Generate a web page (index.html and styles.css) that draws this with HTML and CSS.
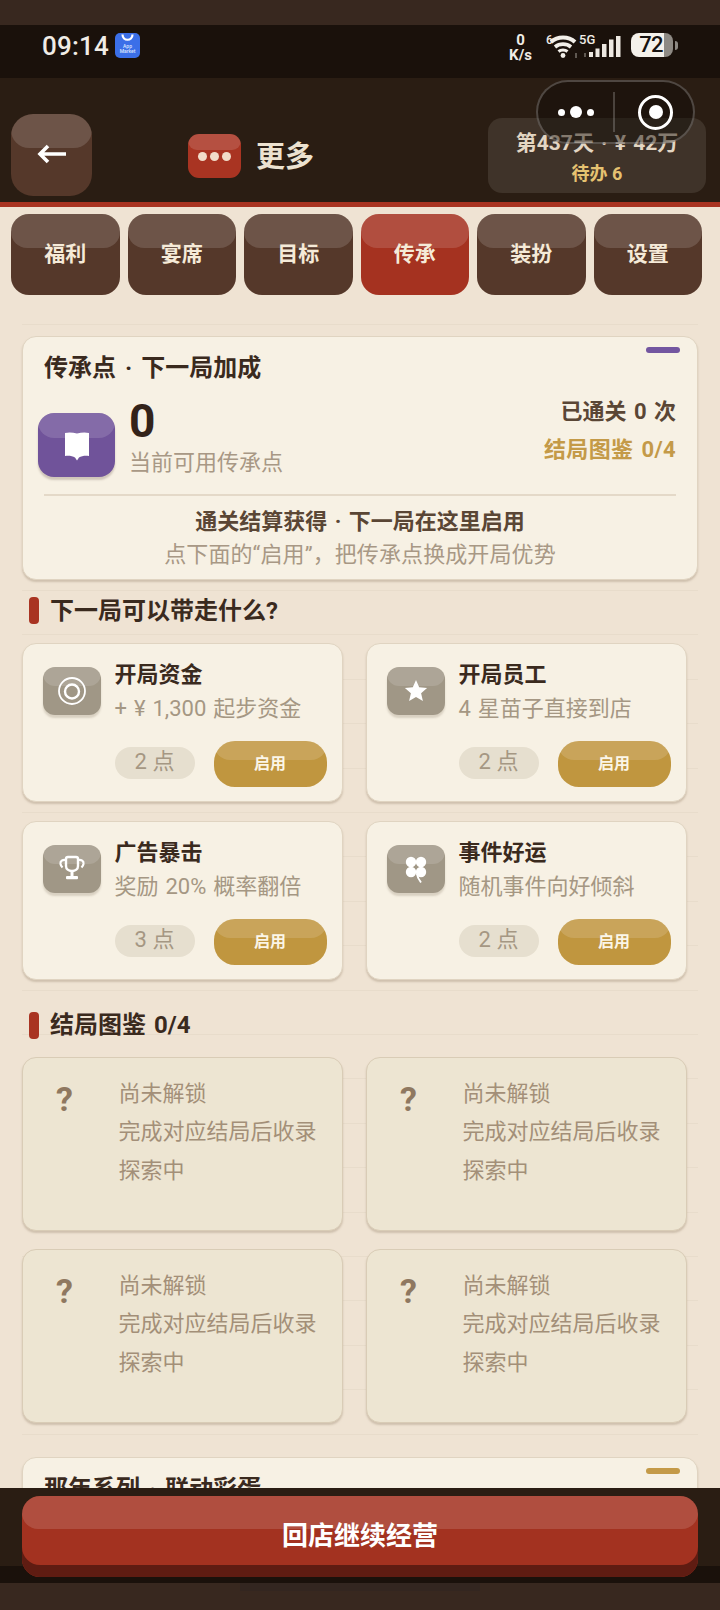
FILE: index.html
```html
<!DOCTYPE html>
<html lang="zh-CN">
<head>
<meta charset="utf-8">
<title>更多</title>
<link rel="stylesheet" href="styles.css">
</head>
<body>
<div class="phone">
  <div class="strip-top"></div>

  <div class="status">
    <span class="clock">09:14</span>
    <span class="store"><svg viewBox="0 0 25 25" width="25" height="25"><path d="M7.500 1.500c0 7 10 7 10 0" fill="none" stroke="#fff" stroke-width="2.200"/><text x="12.500" y="15" class="store-txt">App</text><text x="12.500" y="20" class="store-txt">Market</text></svg></span>
    <span class="speed"><b>0</b><b>K/s</b></span>
    <svg class="wifi" viewBox="0 0 36 26" width="36" height="26">
      <text x="1" y="11" class="mini">6</text>
      <path d="M6 9C12.500 3 23.500 3 30 9" fill="none" stroke="#f2efe9" stroke-width="4"/>
      <path d="M10 14c4.500-3.800 11.500-3.800 16 0" fill="none" stroke="#f2efe9" stroke-width="3.600"/>
      <path d="M13.500 18.500c2.500-2 6.500-2 9 0" fill="none" stroke="#f2efe9" stroke-width="3.200"/>
      <circle cx="18" cy="22.500" r="2.400" fill="#f2efe9"/>
      <path d="M31 20v5" stroke="#77706a" stroke-width="1.500"/>
    </svg>
    <span class="net">
      <span class="net-label">5G</span>
      <svg class="signal" viewBox="0 0 40 26" width="40" height="26">
        <path d="M2 20v4" stroke="#77706a" stroke-width="1.500"/>
        <rect x="6" y="19" width="4" height="5" fill="#eee9e2"/>
        <rect x="12.500" y="15.500" width="4" height="8.500" fill="#eee9e2"/>
        <rect x="19" y="11" width="4.500" height="13" fill="#eee9e2"/>
        <rect x="26" y="6.500" width="4.500" height="17.500" fill="#eee9e2"/>
        <rect x="33" y="3" width="4.500" height="21" fill="#eee9e2"/>
      </svg>
    </span>
    <span class="battery"><span class="battery-num">72</span></span>
    <span class="battery-tip"></span>
  </div>

  <header class="bar">
    <button class="back raised"><svg viewBox="0 0 32 24" width="32" height="24"><path d="M30 12H4M12 4l-8 8 8 8" fill="none" stroke="#fff" stroke-width="3.600"/></svg></button>
    <div class="heading">
      <span class="heading-icon raised"><i></i><i></i><i></i></span>
      <h1>更多</h1>
    </div>
    <div class="stats">
      <div class="stats-main">第437天 · ¥ 42万</div>
      <div class="stats-todo">待办 6</div>
    </div>
  </header>

  <div class="capsule">
    <span class="cap-dots"><i></i><i class="big"></i><i></i></span>
    <span class="cap-line"></span>
    <span class="cap-ring"><i></i></span>
  </div>

  <main class="main">
    <nav class="tabs">
      <a class="tab raised"><span>福利</span></a>
      <a class="tab raised"><span>宴席</span></a>
      <a class="tab raised"><span>目标</span></a>
      <a class="tab raised active"><span>传承</span></a>
      <a class="tab raised"><span>装扮</span></a>
      <a class="tab raised"><span>设置</span></a>
    </nav>

    <div class="scroll">
      <section class="hero">
        <span class="accent purple"></span>
        <h2 class="card-title">传承点 · 下一局加成</h2>
        <div class="hero-row">
          <span class="hero-icon raised">
            <svg viewBox="0 0 34 34" width="34" height="34"><path d="M5 4c4-1 8-.5 12 .5 4-1 8-1.500 12-.5v23c-4-.5-7.500 0-10 1.500l-2 3-2-3c-2.500-1.500-6-2-10-1.500z" fill="#fff"/></svg>
          </span>
          <div class="hero-points">
            <div class="big-num">0</div>
            <div class="hero-label">当前可用传承点</div>
          </div>
          <div class="hero-side">
            <div class="side-a">已通关 0 次</div>
            <div class="side-b">结局图鉴 0/4</div>
          </div>
        </div>
        <div class="hero-note">
          <div class="note-a">通关结算获得 · 下一局在这里启用</div>
          <div class="note-b">点下面的“启用”，把传承点换成开局优势</div>
        </div>
      </section>

      <h3 class="section-head"><span>下一局可以带走什么?</span></h3>
      <div class="grid">
        <article class="card option">
          <span class="opt-icon raised"><svg viewBox="0 0 58 48" width="58" height="48"><circle cx="29" cy="24" r="13" fill="none" stroke="#fff" stroke-width="1.800"/><circle cx="29" cy="24.500" r="7" fill="none" stroke="#fff" stroke-width="2.400"/></svg></span>
          <div class="opt-body">
            <div class="opt-title">开局资金</div>
            <div class="opt-desc">+ ¥ 1,300 起步资金</div>
            <div class="opt-actions"><span class="chip">2 点</span><button class="enable raised">启用</button></div>
          </div>
        </article>
        <article class="card option">
          <span class="opt-icon raised"><svg viewBox="0 0 58 48" width="58" height="48"><path d="M29 13l3.200 7.300 7.900.8-6 5.200 1.800 7.800-6.900-4.100-6.900 4.100 1.800-7.800-6-5.200 7.900-.8z" fill="#fff"/></svg></span>
          <div class="opt-body">
            <div class="opt-title">开局员工</div>
            <div class="opt-desc">4 星苗子直接到店</div>
            <div class="opt-actions"><span class="chip">2 点</span><button class="enable raised">启用</button></div>
          </div>
        </article>
        <article class="card option">
          <span class="opt-icon raised"><svg viewBox="0 0 58 48" width="58" height="48"><path d="M23 14c0-1 1-2 2-2h8c1 0 2 1 2 2v7c0 3-2.500 5-6 5s-6-2-6-5z" fill="none" stroke="#fff" stroke-width="2.400"/><path d="M23 15c-3.500-.5-6 1-5.500 4 .3 1.500 1 2.500 2 3.500M35 15c3.500-.5 6 1 5.500 4-.3 1.500-1 2.500-2 3.500" fill="none" stroke="#fff" stroke-width="2.200"/><path d="M29 26v6" stroke="#fff" stroke-width="3"/><rect x="23" y="31" width="12" height="3.200" rx="1" fill="#fff"/></svg></span>
          <div class="opt-body">
            <div class="opt-title">广告暴击</div>
            <div class="opt-desc">奖励 20% 概率翻倍</div>
            <div class="opt-actions"><span class="chip">3 点</span><button class="enable raised">启用</button></div>
          </div>
        </article>
        <article class="card option">
          <span class="opt-icon raised"><svg viewBox="0 0 58 48" width="58" height="48"><g fill="#fff"><circle cx="24" cy="17" r="5.200"/><circle cx="34" cy="17" r="5.200"/><circle cx="24" cy="27" r="5.200"/><circle cx="34" cy="27" r="5.200"/></g><circle cx="29" cy="22" r="1.200" fill="#a09786"/><path d="M30 29c.5 4 2 6 4 8.500" fill="none" stroke="#fff" stroke-width="2"/></svg></span>
          <div class="opt-body">
            <div class="opt-title">事件好运</div>
            <div class="opt-desc">随机事件向好倾斜</div>
            <div class="opt-actions"><span class="chip">2 点</span><button class="enable raised">启用</button></div>
          </div>
        </article>
      </div>

      <h3 class="section-head second"><span>结局图鉴 0/4</span></h3>
      <div class="grid locked-grid">
        <article class="card locked"><span class="qmark">?</span><div class="lock-text"><div>尚未解锁</div><div>完成对应结局后收录</div><div>探索中</div></div></article>
        <article class="card locked"><span class="qmark">?</span><div class="lock-text"><div>尚未解锁</div><div>完成对应结局后收录</div><div>探索中</div></div></article>
        <article class="card locked"><span class="qmark">?</span><div class="lock-text"><div>尚未解锁</div><div>完成对应结局后收录</div><div>探索中</div></div></article>
        <article class="card locked"><span class="qmark">?</span><div class="lock-text"><div>尚未解锁</div><div>完成对应结局后收录</div><div>探索中</div></div></article>
      </div>

      <section class="hero next">
        <span class="accent gold"></span>
        <h2 class="card-title">那年系列 · 联动彩蛋</h2>
      </section>
    </div>
  </main>

  <footer class="foot">
    <button class="return raised"><span>回店继续经营</span></button>
  </footer>
  <div class="strip-bottom"><span class="handle"></span></div>
</div>
</body>
</html>
```

FILE: styles.css
```css
* { box-sizing: border-box; }
html, body { margin: 0; padding: 0; }
body {
  width: 720px;
  height: 1610px;
  overflow: hidden;
  font-family: Roboto, "Noto Sans CJK SC", sans-serif;
  background: #38281f;
  color: #3a2a1e;
}
h1, h2, h3 { margin: 0; }
.phone {
  position: relative;
  width: 720px;
  height: 1610px;
  display: flex;
  flex-direction: column;
  overflow: hidden;
}
.strip-top { height: 25px; background: #38281f; flex: none; }

/* status bar */
.status {
  flex: none;
  height: 53px;
  background: #1a110b;
  display: flex;
  align-items: flex-start;
  padding: 8px 0 0 42px;
  color: #f0ece6;
}
.clock { font: 500 26px/24px Roboto, sans-serif; width: 66px; margin-top: 1px; letter-spacing: .2px; }
.store { width: 25px; height: 25px; margin-left: 7px; background: #3b6fe8; border-radius: 5px; overflow: hidden; }
.store svg { display: block; }
.store-txt { font: 500 5px Roboto, sans-serif; fill: #dce6ff; text-anchor: middle; }
.speed { margin-left: 368px; width: 25px; display: flex; flex-direction: column; align-items: center; font: 700 15px/15px Roboto, sans-serif; }
.speed b { font-weight: 700; }
.wifi { margin-left: 12px; }
.net { position: relative; width: 40px; margin-left: 2px; height: 26px; }
.net-label { position: absolute; left: -4px; top: -1px; font: 500 13px/15px Roboto, sans-serif; color: #f0ece6; }
.signal { display: block; width: 40px; }
.mini { font: 500 12px Roboto, sans-serif; fill: #f0ece6; }
.battery {
  margin-left: 8px;
  width: 42px;
  height: 24px;
  border-radius: 8px;
  background: linear-gradient(90deg, #f4f1eb 0 33px, #8e8a84 33px);
  display: flex;
  align-items: center;
  justify-content: center;
}
.battery-num { font: 500 22px/24px Roboto, sans-serif; color: #161210; letter-spacing: -.8px; margin-left: -2px; }
.battery-tip { width: 3px; height: 9px; margin: 8px 0 0 2px; background: #8e8a84; border-radius: 0 3px 3px 0; }

/* raised 3D surface */
.raised { position: relative; overflow: hidden; }
.raised::before {
  content: "";
  position: absolute;
  left: 0;
  right: 0;
  top: 0;
  background: rgba(255, 255, 255, .14);
  border-radius: 0 0 16px 16px;
  pointer-events: none;
}

/* header */
.bar {
  flex: none;
  height: 129px;
  background: #2a1d13;
  border-bottom: 5px solid #a93422;
  display: flex;
  align-items: flex-start;
  padding: 36px 14px 0 11px;
}
.back {
  width: 81px;
  height: 82px;
  border: 0;
  border-radius: 22px;
  background: #55382a;
  padding: 0 0 2px;
  display: flex;
  align-items: center;
  justify-content: center;
}
.back::before { height: 34px; border-radius: 0 0 18px 18px; }
.back svg { position: relative; }
.heading { display: flex; align-items: center; margin: 19px 0 0 96px; }
.heading-icon {
  width: 53px;
  height: 44px;
  border-radius: 11px;
  background: #a93422;
  display: flex;
  align-items: center;
  justify-content: center;
  gap: 3px;
}
.heading-icon::before { height: 16px; border-radius: 0 0 9px 9px; }
.heading-icon i { position: relative; width: 9px; height: 9px; border-radius: 50%; background: #f2dcc8; }
h1 { margin: 2px 0 0 15px; font-size: 29px; font-weight: 700; line-height: 44px; color: #ece2d0; }
.stats {
  margin-left: auto;
  margin-top: 4px;
  width: 218px;
  height: 75px;
  border-radius: 14px;
  background: #3f3329;
  text-align: center;
  padding-top: 11px;
}
.stats-main { font-size: 21px; font-weight: 700; line-height: 28px; color: #e3d6c3; white-space: nowrap; word-spacing: 2px; }
.stats-todo { font-size: 18px; font-weight: 700; line-height: 26px; margin-top: 4px; color: #e5c271; }

/* floating capsule */
.capsule {
  position: absolute;
  left: 536px;
  top: 80px;
  width: 159px;
  height: 64px;
  border-radius: 32px;
  border: 2px solid rgba(255, 255, 255, .22);
  background: rgba(16, 10, 6, .45);
  display: flex;
  align-items: center;
  padding-left: 20px;
}
.cap-dots { display: flex; align-items: center; gap: 5px; width: 38px; }
.cap-dots i { width: 7px; height: 7px; border-radius: 50%; background: #fff; flex: none; }
.cap-dots i.big { width: 12px; height: 12px; }
.cap-line { width: 2px; height: 40px; margin-left: 17px; background: rgba(255, 255, 255, .2); }
.cap-ring {
  margin-left: 23px;
  width: 35px;
  height: 35px;
  border-radius: 50%;
  border: 3px solid #fff;
  display: flex;
  align-items: center;
  justify-content: center;
}
.cap-ring i { width: 14px; height: 14px; border-radius: 50%; background: #fff; }

/* main */
.main {
  flex: 1;
  min-height: 0;
  overflow: hidden;
  background: #efe3d3;
  padding-top: 7px;
  display: flex;
  flex-direction: column;
}
.tabs { flex: none; display: flex; gap: 8px; padding: 0 18px 0 11px; }
.tab {
  flex: 1;
  height: 81px;
  border-radius: 18px;
  background: #55382a;
  color: #f5ead8;
  font-size: 21px;
  font-weight: 700;
  display: flex;
  align-items: center;
  justify-content: center;
  padding-bottom: 6px;
}
.tab span { position: relative; }
.tab::before { height: 34px; }
.tab.active { background: #a53220; }
.scroll {
  flex: 1;
  min-height: 0;
  margin: 0 22px;
  padding-top: 41px;
  background-image: repeating-linear-gradient(180deg, transparent 0 28.6px, #e8dccb 28.6px 29.6px, transparent 29.6px 44.4px);
}

.hero {
  position: relative;
  height: 244px;
  background: #f7f1e4;
  border: 1.500px solid #e0d4c1;
  border-radius: 14px;
  box-shadow: 0 2px 2px rgba(150, 130, 105, .35);
  padding: 14.500px 21px 0;
}
.accent { position: absolute; right: 17px; top: 10px; width: 34px; height: 6px; border-radius: 3px; }
.purple { background: #7356a0; }
.gold { background: #c49a48; }
.card-title { font-size: 24px; font-weight: 700; line-height: 32px; color: #3a2a1e; white-space: nowrap; word-spacing: 3px; }
.hero-row { display: flex; margin: 14px 0 0 -6px; height: 82px; }
.hero-icon {
  flex: none;
  width: 77px;
  height: 64px;
  margin-top: 15px;
  border-radius: 16px;
  background: #70539a;
  box-shadow: 0 3px 2px rgba(120, 100, 90, .3);
  display: flex;
  align-items: center;
  justify-content: center;
}
.hero-icon::before { height: 25px; }
.hero-icon svg { position: relative; margin-top: 2px; }
.hero-points { margin-left: 14px; }
.big-num { font-size: 46px; font-weight: 700; line-height: 44px; margin-top: 1px; margin-bottom: -1px; color: #33231a; }
.hero-label { font-size: 22px; line-height: 30px; margin-top: 6px; color: #a89885; }
.hero-side { margin-left: auto; text-align: right; margin-top: -5px; font-size: 22px; font-weight: 700; line-height: 38px; word-spacing: 2px; }
.side-a { color: #5a4635; }
.side-b { color: #c49a48; letter-spacing: .4px; }
.hero-note { margin-top: 14px; border-top: 2px solid #e4d9c8; padding-top: 9px; text-align: center; font-size: 22px; line-height: 33px; }
.note-a { font-weight: 700; color: #5a4635; word-spacing: 2px; }
.note-b { color: #a89885; letter-spacing: .1px; }

.section-head {
  display: flex;
  align-items: center;
  height: 27px;
  margin: 17px 0 19px 7px;
  font-size: 24px;
  font-weight: 700;
  color: #3a2a1e;
}
.section-head span { margin-top: -4px; word-spacing: 2px; }
.section-head::before {
  content: "";
  width: 10px;
  height: 27px;
  margin-right: 11px;
  border-radius: 4px;
  background: #a93422;
}
.section-head.second { margin: 32px 0 18px 7px; }
.section-head.second span { margin-top: -6px; }

.grid { display: grid; grid-template-columns: 321px 321px; column-gap: 23px; row-gap: 19px; }
.card {
  background: #f7f1e4;
  border: 1.500px solid #e0d4c1;
  border-radius: 14px;
  box-shadow: 0 2px 2px rgba(150, 130, 105, .35);
}
.option { display: flex; height: 159px; padding: 14px 0 0 19.500px; }
.opt-icon {
  flex: none;
  width: 58px;
  height: 48px;
  margin-top: 9px;
  border-radius: 12px;
  background: #a09786;
  box-shadow: 0 3px 2px rgba(150, 135, 115, .3);
}
.opt-icon::before { height: 19px; border-radius: 0 0 12px 12px; }
.opt-icon svg { position: relative; display: block; }
.opt-body { margin-left: 14px; flex: 1; }
.opt-title { font-size: 22px; font-weight: 700; line-height: 33px; color: #3a2a1e; }
.opt-desc { font-size: 22px; line-height: 33px; margin-top: 1px; margin-bottom: -1px; color: #a59783; white-space: nowrap; word-spacing: 1.500px; }
.opt-actions { display: flex; align-items: center; margin-top: 16.500px; }
.chip {
  width: 80px;
  height: 32px;
  border-radius: 16px;
  background: #e6dfcf;
  color: #a59783;
  font-size: 22px;
  line-height: 30px;
  text-align: center;
  margin-top: -2px;
}
.enable {
  width: 113px;
  height: 46px;
  margin-left: 19px;
  border: 0;
  border-radius: 21px;
  background: #c0963f;
  color: #fbf5e6;
  font-family: inherit;
  font-size: 16px;
  font-weight: 700;
  padding: 0 0 4px;
}
.enable::before { height: 19px; }

.locked-grid { row-gap: 18px; }
.locked {
  display: flex;
  height: 174px;
  padding: 16.500px 0 0 19.500px;
  background: #ede5d2;
  border-color: #d9ccb6;
}
.qmark { flex: none; width: 44px; text-align: center; font-size: 34px; font-weight: 700; line-height: 44px; color: #8f7860; margin-top: 2px; }
.lock-text { margin-left: 32px; font-size: 22px; line-height: 38.800px; color: #a38f78; white-space: nowrap; }

.next { margin-top: 34px; }

/* footer */
.foot {
  flex: none;
  height: 95px;
  padding: 8px 22px 0;
  background: linear-gradient(180deg, #2a1d13 78px, #1a110b 78px);
}
.return {
  display: block;
  width: 100%;
  height: 81px;
  border: 0;
  border-radius: 18px;
  background: #a33220;
  box-shadow: inset 0 -12px 0 #5f1c12;
  color: #fff;
  font-family: inherit;
  font-size: 26px;
  font-weight: 700;
  padding: 0 0 6px;
}
.return span { position: relative; }
.return::before { height: 33px; }
.strip-bottom { flex: none; height: 27px; background: #38281f; display: flex; justify-content: center; }
.handle { width: 240px; height: 8px; background: #332620; }
```
